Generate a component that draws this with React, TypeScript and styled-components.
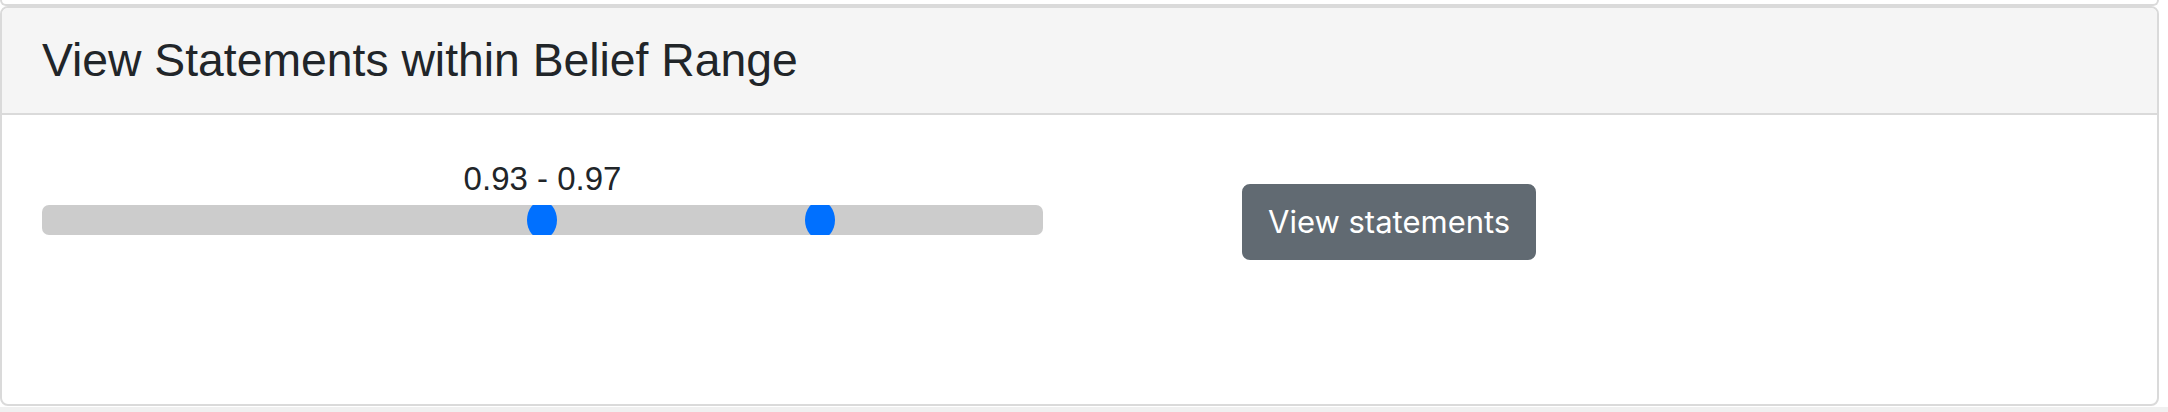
import styled, { createGlobalStyle } from 'styled-components';

const GlobalStyle = createGlobalStyle`
  html, body {
    margin: 0;
    padding: 0;
    background: #ffffff;
  }
  body {
    font-family: "Liberation Sans", Arial, sans-serif;
    color: #212529;
  }
`;

const Page = styled.div`
  width: 2168px;
  display: flex;
  flex-direction: column;
`;

const PrevCard = styled.div`
  width: 2159px;
  height: 6px;
  box-sizing: border-box;
  border: 2px solid #dadada;
  border-top: none;
  border-radius: 0 0 8px 8px;
  background: #ffffff;
`;

const Card = styled.section`
  width: 2159px;
  box-sizing: border-box;
  border: 2px solid #dadada;
  border-radius: 8px;
  background: #ffffff;
  overflow: hidden;
`;

const CardHeader = styled.header`
  background: #f5f5f5;
  border-bottom: 2px solid #dadada;
  padding: 24px 40px;
`;

const Title = styled.h4`
  margin: 0;
  font-size: 46.3px;
  font-weight: 400;
  line-height: 57px;
  color: #212529;
`;

const CardBody = styled.div`
  padding: 40px;
  height: 209px;
  display: flex;
  align-items: flex-start;
  gap: 200px;
`;

const SliderBox = styled.div`
  width: 1001px;
  display: flex;
  flex-direction: column;
`;

const RangeLabel = styled.div`
  text-align: center;
  font-size: 33px;
  line-height: 48px;
  margin-bottom: 2px;
`;

const Track = styled.div`
  position: relative;
  height: 30px;
  border-radius: 7px;
  background: #cccccc;
  overflow: hidden;
`;

const Thumb = styled.div`
  position: absolute;
  top: -4px;
  width: 30px;
  height: 38px;
  margin-left: -15px;
  border-radius: 50%;
  background: #0070ff;
`;

const Button = styled.button`
  margin-top: 29px;
  margin-left: -1px;
  font-family: Inter, "Liberation Sans", sans-serif;
  font-size: 31px;
  line-height: 48px;
  color: #ffffff;
  background: #616a72;
  border: 2px solid #616a72;
  border-radius: 8px;
  padding: 12px 24px;
  cursor: pointer;
`;

const BottomStrip = styled.div`
  margin-top: 1px;
  height: 8px;
  background: #f0f0f0;
`;

const thumbs = [500, 778];

function App() {
  return (
    <Page>
      <GlobalStyle />
      <PrevCard />
      <Card>
        <CardHeader>
          <Title>View Statements within Belief Range</Title>
        </CardHeader>
        <CardBody>
          <SliderBox>
            <RangeLabel>0.93 - 0.97</RangeLabel>
            <Track>
              {thumbs.map((x) => (
                <Thumb key={x} style={{ left: x }} />
              ))}
            </Track>
          </SliderBox>
          <Button>View statements</Button>
        </CardBody>
      </Card>
      <BottomStrip />
    </Page>
  );
}

export default App;
